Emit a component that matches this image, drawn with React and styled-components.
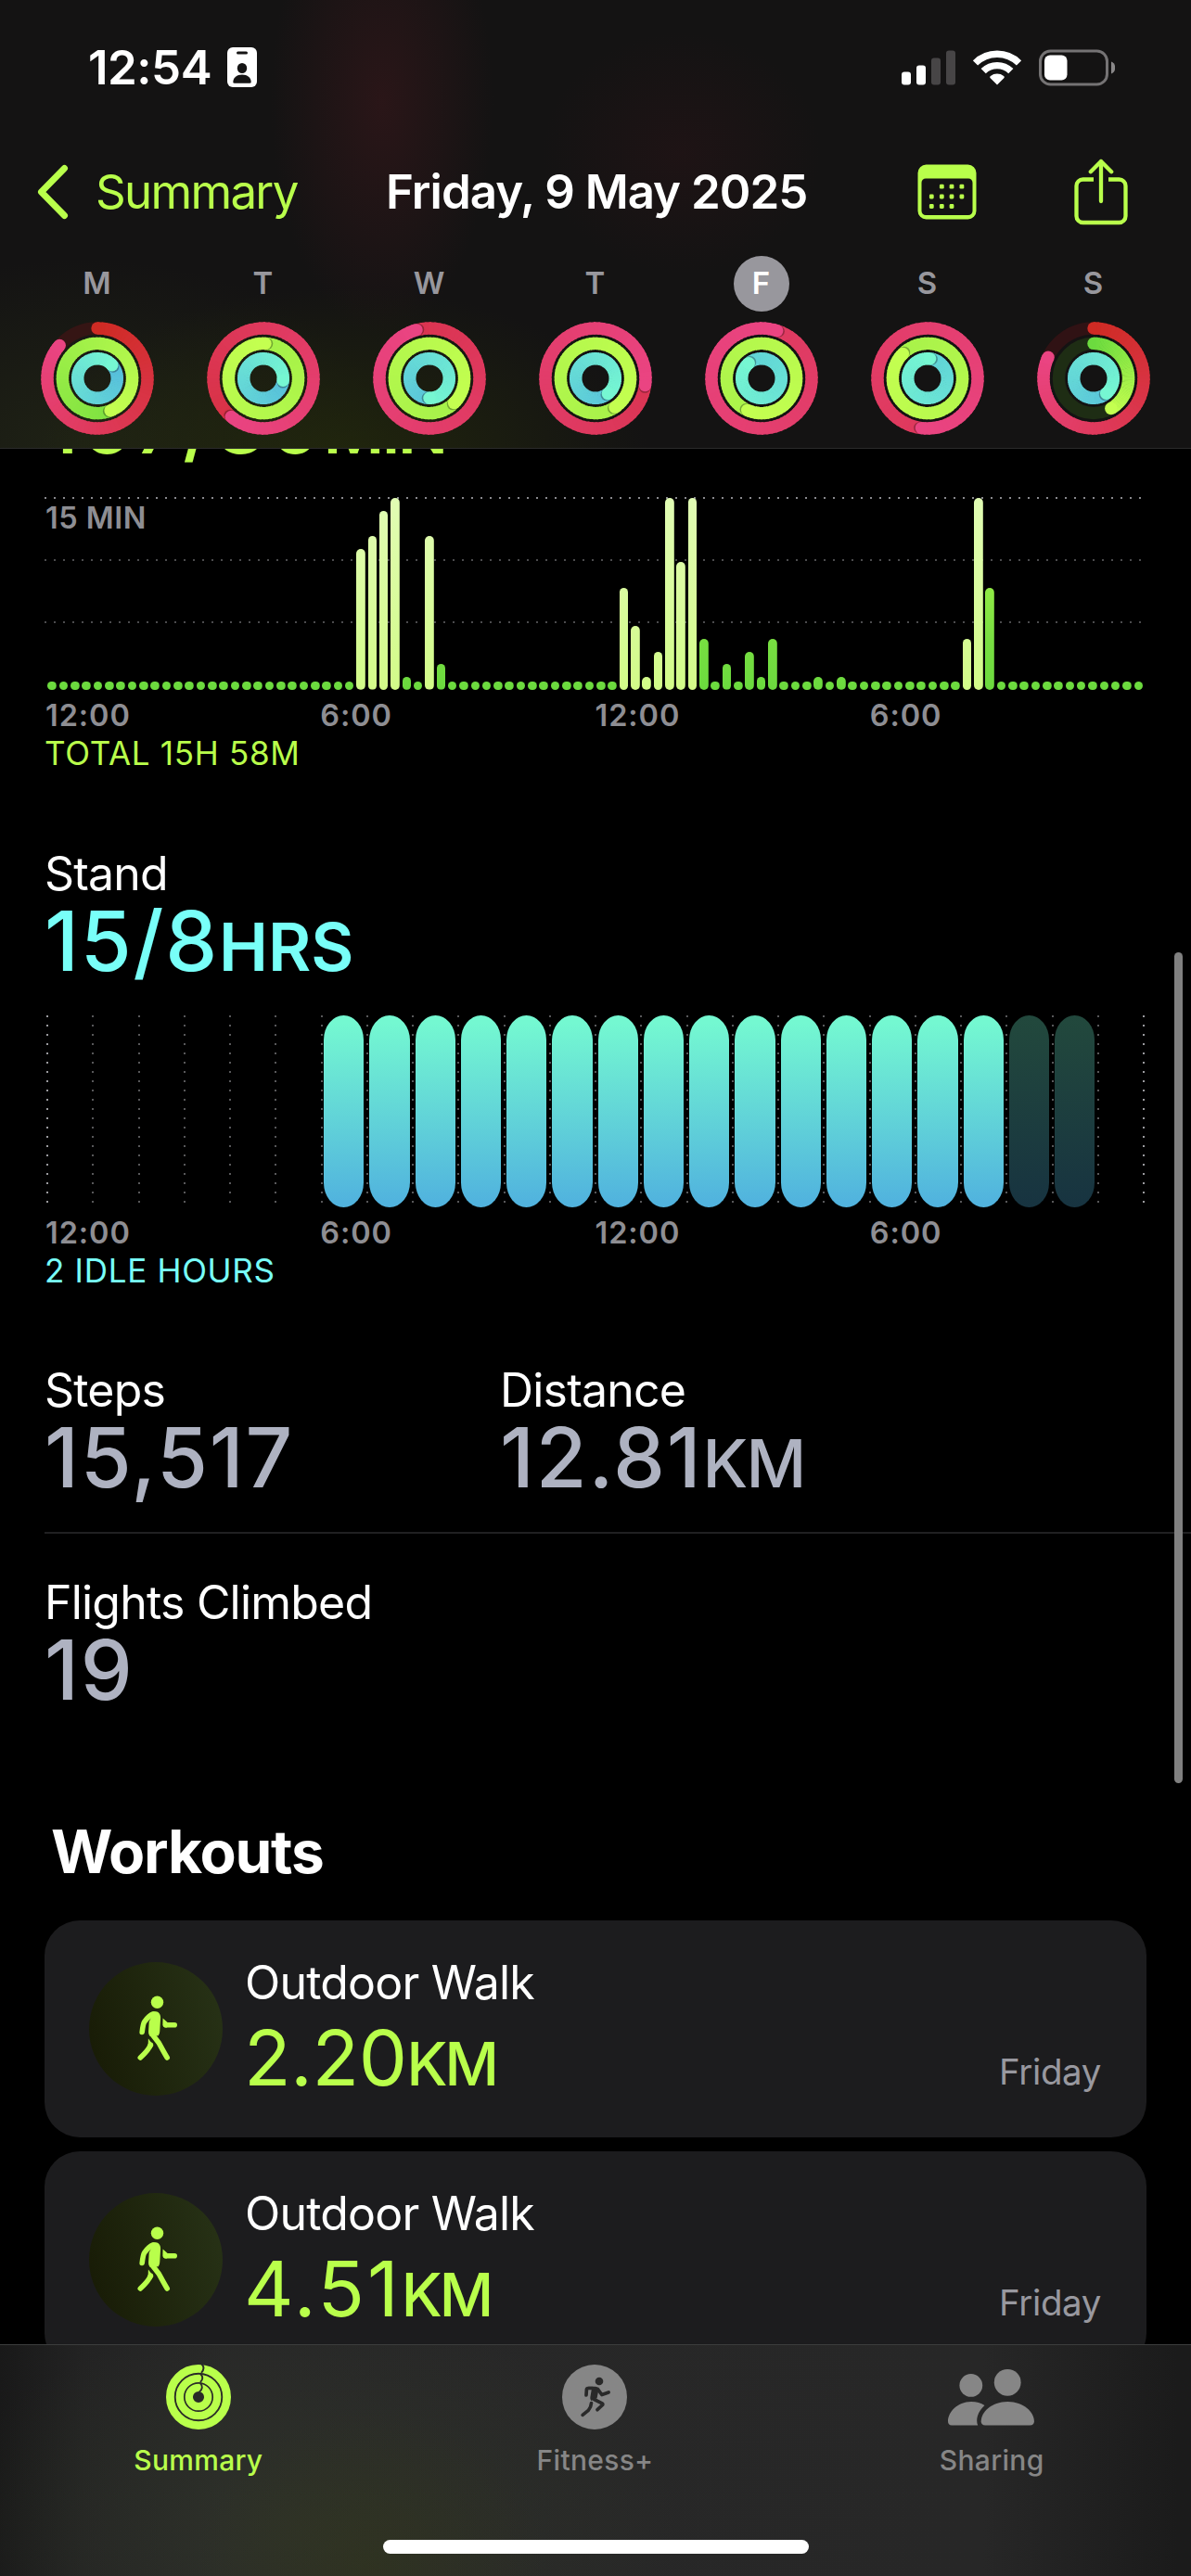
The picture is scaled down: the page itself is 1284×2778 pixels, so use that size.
import React from "react";
import styled, { createGlobalStyle } from "styled-components";

const GlobalStyle = createGlobalStyle`
  body {
    margin: 0;
    background: #000;
    font-family: Inter, "Liberation Sans", sans-serif;
    -webkit-font-smoothing: antialiased;
  }
`;

const LIME = "#b9ff4b";

const Screen = styled("div")`
  position: relative;
  display: flex;
  flex-direction: column;
  width: 1284px;
  height: 2778px;
  overflow: hidden;
  background: #000;
  color: #fff;
`;

/* ---------- header ---------- */

const Header = styled("header")`
  box-sizing: border-box;
  flex: none;
  height: 484px;
  border-bottom: 1px solid #2b2b2b;
  background: radial-gradient(
      ellipse 120px 250px at 412px 110px,
      rgba(60, 24, 28, 0.55),
      rgba(60, 24, 28, 0)
    ),
    radial-gradient(
      ellipse 150px 130px at 735px 165px,
      rgba(48, 20, 24, 0.36),
      rgba(48, 20, 24, 0)
    ),
    radial-gradient(
      ellipse 330px 190px at 370px 500px,
      rgba(38, 46, 10, 0.7),
      rgba(38, 46, 10, 0)
    ),
    radial-gradient(
      ellipse 330px 200px at 90px 480px,
      rgba(38, 44, 22, 0.6),
      rgba(38, 44, 22, 0)
    ),
    #141313;
`;

const StatusBar = styled("div")`
  display: flex;
  align-items: center;
  height: 145px;
  padding: 0 82px 0 95px;
`;

const Clock = styled("div")`
  width: 150px;
  font-size: 51px;
  line-height: 60px;
  font-weight: 600;
  letter-spacing: -0.5px;
`;

const StatusIcons = styled("div")`
  display: flex;
  align-items: center;
  gap: 19px;
  margin-left: auto;
`;

const NavBar = styled("nav")`
  display: flex;
  align-items: center;
  height: 124px;
  padding: 0 68px 0 39px;
`;

const BackLabel = styled("span")`
  width: 313px;
  margin-left: 28px;
  color: ${LIME};
  font-size: 51px;
  line-height: 60px;
  letter-spacing: -1.7px;
`;

const NavTitle = styled("h1")`
  width: 573px;
  margin: 0;
  font-size: 51px;
  line-height: 60px;
  font-weight: 600;
  letter-spacing: -1px;
  white-space: nowrap;
`;

const NavIcons = styled("div")`
  display: flex;
  align-items: center;
  gap: 105px;
  margin-left: auto;
`;

const Week = styled("div")`
  display: grid;
  grid-template-columns: repeat(7, 179px);
  padding: 7px 0 0 15px;
`;

const Day = styled("div")`
  display: flex;
  flex-direction: column;
  align-items: center;
  gap: 11px;
`;

const DayLetter = styled("div")`
  width: 60px;
  height: 60px;
  border-radius: 50%;
  background: ${(p) => (p.$active ? "#98979d" : "transparent")};
  color: ${(p) => (p.$active ? "#fff" : "#98979d")};
  font-size: 33px;
  line-height: 59px;
  font-weight: 600;
  text-align: center;
`;

/* ---------- content ---------- */

const Content = styled("main")`
  flex: 1;
  min-height: 0;
  overflow: hidden;
`;

const Section = styled("section")`
  width: 1184px;
  margin: ${(p) => p.$top}px 0 0 50px;
`;

const Label = styled("div")`
  margin-left: -2px;
  font-size: 50px;
  line-height: 60px;
  letter-spacing: -0.8px;
  white-space: nowrap;
`;

const Value = styled("div")`
  margin: 3px 0 0 -2px;
  color: ${(p) => p.$color};
  font-size: 89px;
  line-height: 80px;
  font-weight: 500;
  letter-spacing: 1.8px;
  white-space: nowrap;

  small {
    font-size: 71px;
    line-height: 0;
    font-weight: ${(p) => p.$unitWeight || 500};
    letter-spacing: ${(p) => p.$unitSpacing || 0}px;
  }
`;

const AxisLabels = styled("div")`
  display: grid;
  grid-template-columns: repeat(4, 1fr);
  margin: 8px 0 0 -1px;
  color: #8e8e93;
  font-size: 32.5px;
  line-height: 40px;
  font-weight: 600;
  letter-spacing: 0.9px;
`;

const Caption = styled("div")`
  margin: 0 0 0 -2px;
  color: ${(p) => p.$color};
  font-size: 35px;
  line-height: 40px;
  letter-spacing: 0.7px;
`;

const Chart = styled("div")`
  position: relative;
  display: flex;
  align-items: flex-end;
  width: ${(p) => p.$width || 1184}px;
  height: 207px;
  margin-top: 40px;
`;

const GridLine = styled("div")`
  position: absolute;
  left: -2px;
  right: 2px;
  top: ${(p) => p.$y}px;
  height: 2px;
  background: repeating-linear-gradient(
    90deg,
    ${(p) => (p.$strong ? "#8a8a8e" : "#4c4c4e")} 0 2px,
    transparent 2px 10px
  );
`;

const ChartMax = styled("div")`
  position: absolute;
  left: -1px;
  top: 2px;
  color: #8e8e93;
  font-size: 32.5px;
  line-height: 40px;
  font-weight: 600;
  letter-spacing: 0.5px;
`;

const Slot = styled("div")`
  position: relative;
  display: flex;
  flex: 1;
  justify-content: center;
`;

const Bar = styled("div")`
  width: 9.6px;
  border-radius: 5px;
  background: ${(p) =>
      p.$light
        ? "linear-gradient(0deg, #d2fb88, #e1fcb4)"
        : "linear-gradient(0deg, #6bda3e, #77de41 25%, #b9ff4b)"}
    bottom / 100% 207px no-repeat;
`;

const HourSlot = styled("div")`
  box-sizing: border-box;
  flex: 1;
  height: 207px;
  padding-left: 3.6px;
  background: repeating-linear-gradient(
      180deg,
      ${(p) => (p.$strong ? "#9a9a9e" : "#58585a")} 0 2px,
      transparent 2px 10px
    )
    left top / 2px 203px no-repeat;
`;

const HourPill = styled("div")`
  width: 43.4px;
  height: 207px;
  border-radius: 22px / 27px;
  background: linear-gradient(178deg, #74f8d1 4%, #51b3de 97%);
  opacity: ${(p) => (p.$idle ? 0.29 : 1)};
`;

const LastHour = styled("div")`
  position: absolute;
  right: -2px;
  top: 0;
  width: 2px;
  height: 203px;
  background: repeating-linear-gradient(
    180deg,
    #9a9a9e 0 2px,
    transparent 2px 10px
  );
`;

const StatRow = styled("div")`
  display: grid;
  grid-template-columns: 491px 1fr;
  box-sizing: border-box;
  height: ${(p) => p.$height}px;
  margin: ${(p) => p.$top}px 0 0 48px;
  padding-left: 2px;
  border-bottom: ${(p) => (p.$divided ? "2px solid #202022" : "none")};
`;

const SectionTitle = styled("h2")`
  margin: 0 0 39px 55px;
  font-size: 64px;
  line-height: 70px;
  font-weight: 700;
  letter-spacing: -1.2px;
`;

const WorkoutCard = styled("div")`
  box-sizing: border-box;
  display: flex;
  align-items: center;
  width: 1188px;
  height: 234px;
  margin: 0 0 15px 48px;
  padding: 0 49px 0 48px;
  border-radius: 38px;
  background: #1c1c1e;
`;

const WorkoutBadge = styled("div")`
  width: 144px;
  height: 144px;
  border-radius: 50%;
  background: linear-gradient(75deg, #171a05, #283317);
`;

const WorkoutInfo = styled("div")`
  margin: -10px 0 0 26px;
`;

const WorkoutValue = styled("div")`
  margin: 11px 0 0 -3px;
  color: ${LIME};
  font-size: 83px;
  line-height: 80px;
  letter-spacing: ${(p) => p.$spacing}px;

  small {
    font-size: 64px;
    line-height: 0;
    font-weight: 450;
    letter-spacing: -3px;
  }
`;

const WorkoutDay = styled("div")`
  align-self: flex-end;
  margin: 0 0 46px auto;
  color: #98989f;
  font-size: 38.5px;
  line-height: 50px;
  letter-spacing: -0.4px;
`;

const ScrollThumb = styled("div")`
  position: absolute;
  left: 1266px;
  top: 1027px;
  width: 9px;
  height: 896px;
  border-radius: 5px;
  background: #808080;
`;

/* ---------- tab bar ---------- */

const TabBar = styled("footer")`
  box-sizing: border-box;
  position: relative;
  flex: none;
  height: 250px;
  border-top: 1px solid #3c3d3d;
  background: radial-gradient(
      ellipse 190px 170px at 400px 240px,
      rgba(50, 54, 24, 0.45),
      rgba(50, 54, 24, 0)
    ),
    radial-gradient(
      ellipse 400px 230px at 330px 200px,
      rgba(50, 56, 42, 0.6),
      rgba(50, 56, 42, 0)
    ),
    linear-gradient(
      90deg,
      #191919,
      #232323 90px,
      #282828 240px,
      #272727 1060px,
      #1b1b1b 1270px
    );
`;

const Tabs = styled("div")`
  display: grid;
  grid-template-columns: repeat(3, 1fr);
  padding-right: 1px;
`;

const Tab = styled("div")`
  display: flex;
  flex-direction: column;
  align-items: center;
  padding-top: 21px;
  color: ${(p) => (p.$active ? LIME : "#868686")};
  font-size: 30px;
  line-height: 36px;
  font-weight: 500;
  letter-spacing: 0.3px;

  svg {
    margin-bottom: 15px;
  }
`;

const HomeIndicator = styled("div")`
  position: absolute;
  left: 413px;
  bottom: 24px;
  width: 459px;
  height: 15px;
  border-radius: 8px;
  background: #fff;
`;

/* ---------- icons ---------- */

const IdIcon = () => (
  <svg width="32" height="43" viewBox="0 0 32 43">
    <rect width="32" height="43" rx="6" fill="#fff" />
    <rect x="10" y="4.5" width="12" height="3" rx="1.5" fill="#151414" />
    <ellipse cx="16" cy="22.5" rx="5.2" ry="5.6" fill="#151414" />
    <path
      d="M6.3 37.5c0-5 4-8 9.700-8s9.700 3 9.700 8c0 .8-.6 1.200-1.300 1.200H7.600c-.7 0-1.300-.4-1.300-1.200z"
      fill="#151414"
    />
  </svg>
);

const SignalIcon = () => (
  <svg width="58" height="38" viewBox="0 0 58 38">
    <rect x="0" y="23.500" width="10" height="14" rx="3" fill="#fff" />
    <rect x="16" y="16.500" width="10" height="21" rx="3" fill="#fff" />
    <rect x="32" y="8.500" width="10" height="29" rx="3" fill="#474546" />
    <rect x="48" y="0.500" width="10" height="37" rx="3" fill="#474546" />
  </svg>
);

const WifiIcon = () => (
  <svg width="52" height="38" viewBox="0 0 52 38">
    <g fill="none" stroke="#fff" strokeWidth="7.400">
      <path d="M2.500 14A33.300 33.300 0 0 1 49.500 14" />
      <path d="M11.200 22.700A21 21 0 0 1 40.800 22.700" />
    </g>
    <path
      d="M26 37.500L18.700 30.200c-.7-.7-.6-1.700.2-2.300a11.700 11.700 0 0 1 14.200 0c.8.600.9 1.600.2 2.300z"
      fill="#fff"
    />
  </svg>
);

const BatteryIcon = () => (
  <svg width="82" height="40" viewBox="0 0 82 40">
    <rect
      x="1.500"
      y="2"
      width="72"
      height="36"
      rx="11"
      fill="none"
      stroke="#757374"
      strokeWidth="3"
    />
    <rect x="6" y="6.500" width="24.500" height="27" rx="6" fill="#fff" />
    <path d="M78 13.500c3 1 4.200 3.500 4.200 6.500s-1.200 5.500-4.200 6.500z" fill="#8a8889" />
  </svg>
);

const BackIcon = () => (
  <svg width="36" height="60" viewBox="0 0 36 60">
    <path
      d="M30.500 4.500L5.500 30l25 25.500"
      fill="none"
      stroke={LIME}
      strokeWidth="7"
      strokeLinecap="round"
      strokeLinejoin="round"
    />
  </svg>
);

const calendarDots = [
  [26.300, 24.200],
  [37, 24.200],
  [47.900, 24.200],
  [15.300, 35],
  [26.300, 35],
  [37, 35],
  [47.900, 35],
  [15.300, 45.500],
  [26.300, 45.500],
  [37, 45.500],
];

const CalendarIcon = () => (
  <svg width="64" height="60" viewBox="0 0 64 60">
    <path
      fill={LIME}
      fillRule="evenodd"
      d="M9.500.5h45a9 9 0 0 1 9 9v41a9 9 0 0 1-9 9h-45a9 9 0 0 1-9-9v-41a9 9 0 0 1 9-9zM9 15.500a4.500 4.500 0 0 0-4.500 4.500v30.500a4.500 4.500 0 0 0 4.500 4.500h46a4.500 4.500 0 0 0 4.500-4.500V20a4.500 4.500 0 0 0-4.500-4.500z"
    />
    {calendarDots.map(([x, y]) => (
      <rect
        key={`${x}-${y}`}
        x={x - 2.400}
        y={y - 2.400}
        width="4.800"
        height="4.800"
        rx="1.300"
        fill={LIME}
      />
    ))}
  </svg>
);

const ShareIcon = () => (
  <svg width="58" height="72" viewBox="0 0 58 72">
    <g
      fill="none"
      stroke={LIME}
      strokeWidth="4.300"
      strokeLinejoin="round"
    >
      <path d="M21 22.500H9.500a7 7 0 0 0-7 7v32.500a7 7 0 0 0 7 7h39a7 7 0 0 0 7-7V29.500a7 7 0 0 0-7-7H37" />
      <path d="M29 3v43M17.800 14.300L29 3l11.200 11.300" strokeLinecap="round" />
    </g>
  </svg>
);

const WalkIcon = () => (
  <svg width="144" height="144" viewBox="0 0 144 144">
    <circle cx="73.500" cy="43.200" r="6.700" fill={LIME} />
    <path
      d="M70.500 53c4.200 0 6.800 2.800 6.600 7l-.8 14c-.1 2.300-.7 3.800-1.500 5.200L66 80c-1.500-1.500-2-3.300-1.900-5.600l.6-10.200z"
      fill={LIME}
    />
    <g
      fill="none"
      stroke={LIME}
      strokeWidth="5.600"
      strokeLinecap="round"
      strokeLinejoin="round"
    >
      <path d="M69 56c-3 1-7.500 5.800-9.300 8.300-1 1.500-1.900 6-2.500 11.200" />
      <path d="M67.800 77.500l7.200 9.200c2 3.500 6.500 12 9.200 16.300" />
      <path d="M55.300 103c5-4.500 9.500-9.300 11-13.800" />
      <path d="M83 67.700h9.200" />
    </g>
    <path d="M63.900 82.500l5.600 7.200-2.200 3.500-3.700-2.700z" fill={LIME} />
    <path d="M79.600 60.500l5 4.600-.5 5.400h-1.500c-2 0-3-1.100-3.200-3z" fill={LIME} />
  </svg>
);

const ActivityIcon = () => (
  <svg width="70" height="70" viewBox="0 0 70 70">
    <g fill="none" stroke={LIME}>
      <circle cx="35" cy="35" r="30.600" strokeWidth="8.800" />
      <circle cx="35" cy="35" r="20.200" strokeWidth="8.300" />
      <circle cx="35" cy="35" r="10.200" strokeWidth="8.300" />
    </g>
    <g fill="none" stroke="#2a2b28" strokeWidth="1.900">
      <path d="M38.500-.5c2.600 2.700 2.600 6-.5 9.300" />
      <path d="M37.300 10.200c2.700 2.600 2.700 5.900-.4 8.800" />
      <path d="M37 20.400c2.800 2.600 2.500 6.200-1.200 9" />
    </g>
  </svg>
);

const RunIcon = () => (
  <svg width="70" height="70" viewBox="0 0 70 70">
    <circle cx="35" cy="35" r="35" fill="#868686" />
    <circle cx="40" cy="18" r="4.300" fill="#292929" />
    <path
      d="M28 23.700h7.500c2.800 0 4.200 1.800 3.700 4.200l-1.600 8.300-6.200 2.800c-1-1.200-1.200-2.500-1-4l1.500-9z"
      fill="#292929"
    />
    <g
      fill="none"
      stroke="#292929"
      strokeWidth="3.700"
      strokeLinecap="round"
      strokeLinejoin="round"
    >
      <path d="M33 25.500h-5c-1 0-1.500.4-1.600 1.300L26 33" />
      <path d="M38.500 26.500l4.300 6 7.300-2.600" />
      <path d="M34.500 37.500l8.600 4.300c.8.400.9 1 .5 1.700L38 48.700" />
      <path d="M31.500 41.500c-.2 3.500-1.100 5.500-3.200 7.900l-6.200 5" />
    </g>
  </svg>
);

const SharingIcon = () => (
  <svg width="94" height="70" viewBox="0 0 94 70" fill="#868686">
    <circle cx="24.800" cy="22.400" r="12.400" />
    <circle cx="64.200" cy="19.300" r="14.400" />
    <path d="M4 65.500c-2.600 0-4-1.500-4-4.200C0 51.500 10 40 25 40c5.700 0 10.600 1.500 14.500 4-5.500 5-8.300 11-8.300 16.500 0 1.900.3 3.500 1 5z" />
    <path d="M40.300 65.500c-3.200 0-4.600-1.500-4.600-4.200 0-9.800 11-21.300 28.600-21.300s28.600 11.500 28.600 21.300c0 2.700-1.400 4.200-4.600 4.200z" />
  </svg>
);

/* ---------- activity rings ---------- */

const hex = (c) => [1, 3, 5].map((i) => parseInt(c.slice(i, i + 2), 16));

const mix = (a, b, t) => {
  const to = hex(b);
  return `rgb(${hex(a)
    .map((v, i) => Math.round(v + (to[i] - v) * t))
    .join(",")})`;
};

const point = (r, deg) => {
  const rad = ((deg - 90) * Math.PI) / 180;
  return [61 + r * Math.cos(rad), 61 + r * Math.sin(rad)];
};

const STEPS = 72;

// full rings have lapped, so they fade from `from` right behind the cap
const Ring = ({ r, end, from, to, partial, track }) => {
  const start = partial ? 0 : end - 360;
  const step = (end - start) / STEPS;
  const [cx, cy] = point(r, end);
  const [sx, sy] = point(r, end + 110 / r);
  return (
    <g fill="none" strokeWidth="13.400">
      {partial && <circle cx="61" cy="61" r={r} stroke={track} />}
      {partial && <circle cx="61" cy={61 - r} r="6.700" fill={from} />}
      {Array.from({ length: STEPS }, (_, i) => {
        const a = start + i * step;
        const [x1, y1] = point(r, a);
        const [x2, y2] = point(r, a + step * (i < STEPS - 1 ? 1.4 : 1));
        return (
          <path
            key={i}
            d={`M${x1} ${y1}A${r} ${r} 0 0 1 ${x2} ${y2}`}
            stroke={mix(from, to, i / (STEPS - 1))}
          />
        );
      })}
      {!partial && (
        <circle cx={sx} cy={sy} r="6.400" fill="#000" fillOpacity="0.3" />
      )}
      <circle cx={cx} cy={cy} r="6.700" fill={to} />
    </g>
  );
};

const Rings = ({ move, exercise, stand }) => (
  <svg width="122" height="122" viewBox="0 0 122 122">
    <Ring r={54} to="#ea4482" track="#351514" {...move} />
    <Ring r={37.600} to="#c4ff50" track="#1e2d14" {...exercise} />
    <Ring r={21.300} to="#76f7d2" {...stand} />
  </svg>
);

const week = [
  {
    day: "M",
    move: { end: 311, from: "#cf2b24", partial: true },
    exercise: { end: 158, from: "#7fe241" },
    stand: { end: 48, from: "#55bcdc" },
  },
  {
    day: "T",
    move: { end: 220, from: "#d83246" },
    exercise: { end: 3, from: "#a4f148" },
    stand: { end: 96, from: "#57bfdb" },
  },
  {
    day: "W",
    move: { end: 345, from: "#da3450" },
    exercise: { end: 135, from: "#a6f14a" },
    stand: { end: 180, from: "#5ac5da" },
  },
  {
    day: "T",
    move: { end: 98, from: "#da3553" },
    exercise: { end: 146, from: "#a8f24a" },
    stand: { end: 141, from: "#5ac6da" },
  },
  {
    day: "F",
    active: true,
    move: { end: 18, from: "#df3a60" },
    exercise: { end: 204, from: "#abf34b" },
    stand: { end: 320, from: "#60d3d8" },
  },
  {
    day: "S",
    move: { end: 187, from: "#de395c" },
    exercise: { end: 315, from: "#a8f24a" },
    stand: { end: 7, from: "#60d3d8" },
  },
  {
    day: "S",
    move: { end: 295, from: "#cf2b24", partial: true, track: "#301214" },
    exercise: { end: 150, from: "#6cdb3f", partial: true },
    stand: { end: 140, from: "#5ac5da" },
  },
];

// minutes per quarter hour
const exerciseMinutes = {
  27: 11, 28: 12, 29: 14, 30: 15, 31: 1, 33: 12, 34: 2,
  50: 8, 51: 5, 52: 1, 53: 3, 54: 15, 55: 10, 56: 15, 57: 4,
  59: 2, 61: 3, 62: 1, 63: 4, 67: 1, 69: 1,
  80: 4, 81: 15, 82: 8,
};
const workoutQuarters = [27, 28, 29, 30, 33, 50, 51, 52, 53, 54, 55, 56, 80, 81];

const hours = ["12:00", "6:00", "12:00", "6:00"];

const workouts = [
  { name: "Outdoor Walk", km: "2.20", day: "Friday", spacing: -0.5 },
  { name: "Outdoor Walk", km: "4.51", day: "Friday", spacing: 3 },
];

const barHeight = (minutes) => (minutes ? minutes * 13.8 : 9);

const Axis = () => (
  <AxisLabels>
    {hours.map((h, i) => (
      <span key={i}>{h}</span>
    ))}
  </AxisLabels>
);

const ExerciseChart = () => (
  <Chart>
    <GridLine $y={-1} $strong />
    <GridLine $y={66} />
    <GridLine $y={133} />
    <ChartMax>15 MIN</ChartMax>
    {Array.from({ length: 96 }, (_, i) => (
      <Slot key={i}>
        <Bar
          $light={workoutQuarters.includes(i)}
          style={{ height: barHeight(exerciseMinutes[i]) }}
        />
      </Slot>
    ))}
  </Chart>
);

const StandChart = () => (
  <Chart $width={1182}>
    {Array.from({ length: 24 }, (_, i) => (
      <HourSlot key={i} $strong={i === 0}>
        {i > 5 && i < 23 && <HourPill $idle={i > 20} />}
      </HourSlot>
    ))}
    <LastHour />
  </Chart>
);

const App = () => {
  return (
    <>
      <GlobalStyle />
      <Screen>
        <Header>
          <StatusBar>
            <Clock>12:54</Clock>
            <IdIcon />
            <StatusIcons>
              <SignalIcon />
              <WifiIcon />
              <BatteryIcon />
            </StatusIcons>
          </StatusBar>
          <NavBar>
            <BackIcon />
            <BackLabel>Summary</BackLabel>
            <NavTitle>Friday, 9 May 2025</NavTitle>
            <NavIcons>
              <CalendarIcon />
              <ShareIcon />
            </NavIcons>
          </NavBar>
          <Week>
            {week.map(({ day, active, ...rings }, i) => (
              <Day key={i}>
                <DayLetter $active={active}>{day}</DayLetter>
                <Rings {...rings} />
              </Day>
            ))}
          </Week>
        </Header>
        <Content>
          <Section $top={-70}>
            <Value $color={LIME} $unitWeight={600} $unitSpacing={-2.5}>
              167/30<small>MIN</small>
            </Value>
            <ExerciseChart />
            <Axis />
            <Caption $color={LIME}>TOTAL 15H 58M</Caption>
          </Section>
          <Section $top={80}>
            <Label>Stand</Label>
            <Value $color="#78fff8" $unitWeight={600}>
              15/8<small>HRS</small>
            </Value>
            <StandChart />
            <Axis />
            <Caption $color="#78fff8">2 IDLE HOURS</Caption>
          </Section>
          <StatRow $top={79} $height={185} $divided>
            <div>
              <Label>Steps</Label>
              <Value $color="#aeb2c1">15,517</Value>
            </div>
            <div>
              <Label>Distance</Label>
              <Value $color="#aeb2c1" $unitWeight={550} $unitSpacing={-2}>
                12.81<small>KM</small>
              </Value>
            </div>
          </StatRow>
          <StatRow $top={44} $height={264}>
            <div>
              <Label>Flights Climbed</Label>
              <Value $color="#aeb2c1">19</Value>
            </div>
          </StatRow>
          <SectionTitle>Workouts</SectionTitle>
          {workouts.map((w) => (
            <WorkoutCard key={w.km}>
              <WorkoutBadge>
                <WalkIcon />
              </WorkoutBadge>
              <WorkoutInfo>
                <Label>{w.name}</Label>
                <WorkoutValue $spacing={w.spacing}>
                  {w.km}
                  <small>KM</small>
                </WorkoutValue>
              </WorkoutInfo>
              <WorkoutDay>{w.day}</WorkoutDay>
            </WorkoutCard>
          ))}
        </Content>
        <TabBar>
          <Tabs>
            <Tab $active>
              <ActivityIcon />
              Summary
            </Tab>
            <Tab>
              <RunIcon />
              Fitness+
            </Tab>
            <Tab>
              <SharingIcon />
              Sharing
            </Tab>
          </Tabs>
          <HomeIndicator />
        </TabBar>
        <ScrollThumb />
      </Screen>
    </>
  );
};

export default App;
